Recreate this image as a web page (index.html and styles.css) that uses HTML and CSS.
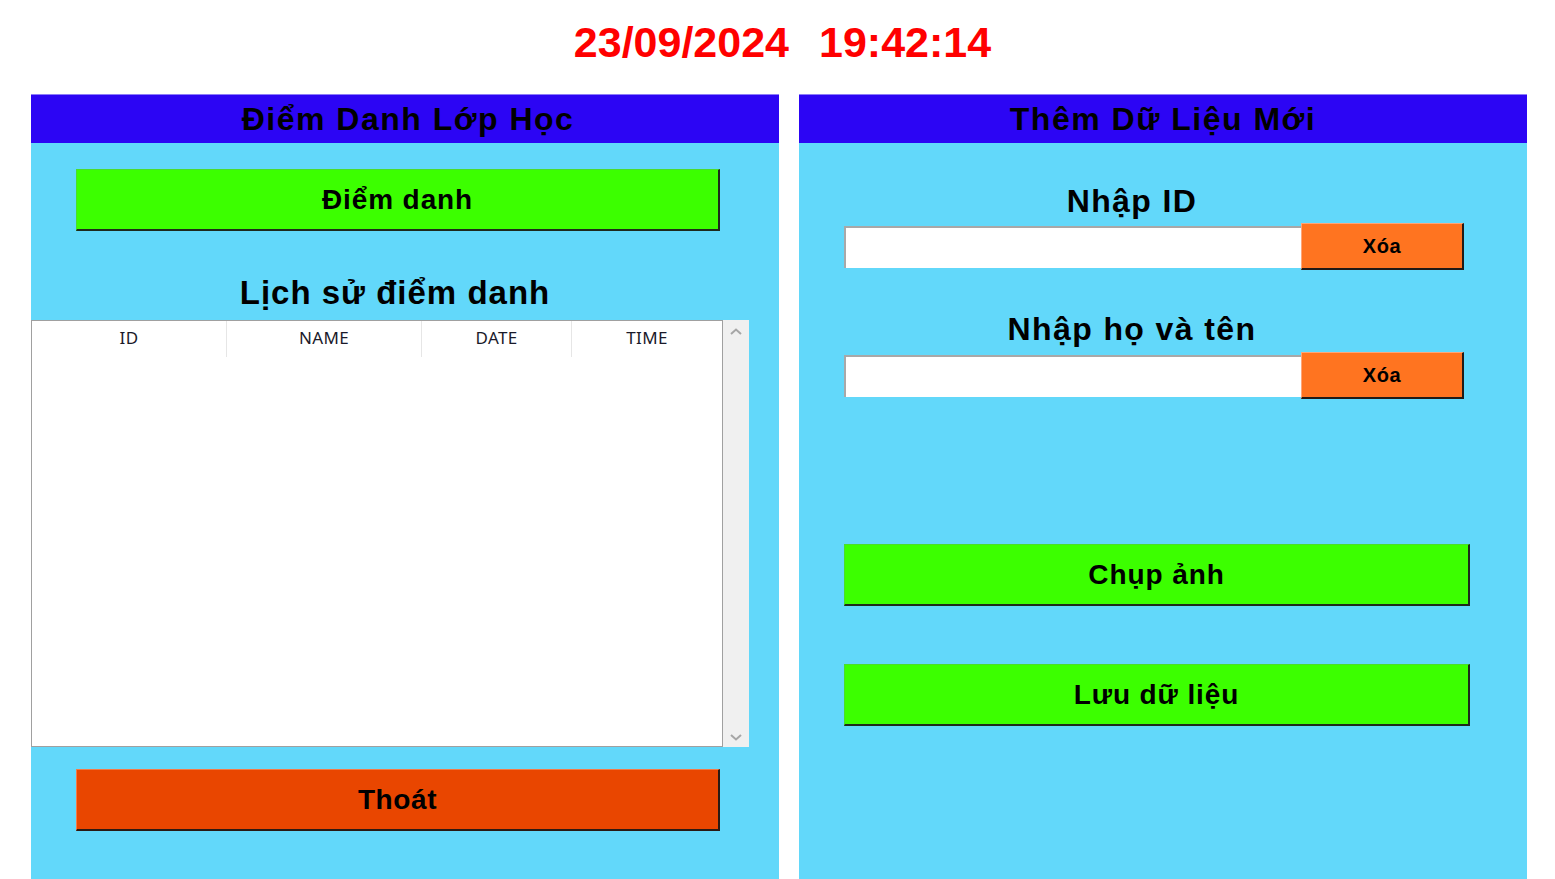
FILE: index.html
```html
<!DOCTYPE html>
<html lang="vi">
<head>
<meta charset="utf-8">
<title>Điểm Danh</title>
<link rel="stylesheet" href="styles.css">
</head>
<body>
<div class="clock"><span>23/09/2024</span><span>19:42:14</span></div>
<div class="panels">
  <section class="panel panel-left">
    <h1 class="panel-head">Điểm Danh Lớp Học</h1>
    <div class="panel-body left-body">
      <button class="btn btn-green btn-wide">Điểm danh</button>
      <h2 class="sub-title">Lịch sử điểm danh</h2>
      <div class="table-wrap">
        <div class="table">
          <div class="thead">
            <div class="th c1">ID</div>
            <div class="th c2">NAME</div>
            <div class="th c3">DATE</div>
            <div class="th c4">TIME</div>
          </div>
        </div>
        <div class="scrollbar">
          <svg class="chev" width="14" height="10" viewBox="0 0 14 10"><path d="M2 7 L7 2.5 L12 7" fill="none" stroke="#a6a6a6" stroke-width="2"/></svg>
          <svg class="chev" width="14" height="10" viewBox="0 0 14 10"><path d="M2 3 L7 7.5 L12 3" fill="none" stroke="#a6a6a6" stroke-width="2"/></svg>
        </div>
      </div>
      <button class="btn btn-red btn-wide">Thoát</button>
    </div>
  </section>
  <section class="panel panel-right">
    <h1 class="panel-head">Thêm Dữ Liệu Mới</h1>
    <div class="panel-body right-body">
      <div class="field first">
        <label class="field-label">Nhập ID</label>
        <div class="field-row">
          <input class="text-input" type="text">
          <button class="btn btn-orange">Xóa</button>
        </div>
      </div>
      <div class="field second">
        <label class="field-label">Nhập họ và tên</label>
        <div class="field-row">
          <input class="text-input" type="text">
          <button class="btn btn-orange">Xóa</button>
        </div>
      </div>
      <button class="btn btn-green btn-right btn-capture">Chụp ảnh</button>
      <button class="btn btn-green btn-right btn-save">Lưu dữ liệu</button>
    </div>
  </section>
</div>
</body>
</html>
```

FILE: styles.css
```css
* { box-sizing: border-box; }
html, body { margin: 0; padding: 0; background: #ffffff; }
body {
  width: 1555px;
  height: 879px;
  overflow: hidden;
  font-family: "Liberation Sans", Arial, sans-serif;
}
.clock {
  height: 94px;
  display: flex;
  justify-content: center;
  gap: 30px;
  padding-top: 17px;
  padding-left: 10px;
  color: #ff0000;
  font-weight: bold;
  font-size: 43px;
  line-height: 50px;
}
.panels {
  display: flex;
  padding-left: 31px;
  gap: 20px;
  height: 785px;
}
.panel {
  background: #62d8fa;
  height: 785px;
  display: flex;
  flex-direction: column;
}
.panel-left { width: 748px; }
.panel-right { width: 728px; }
.panel-head {
  margin: 0;
  height: 49px;
  background: #2c05f4;
  border-top: 1px solid #8c7cf8;
  color: #000;
  font-size: 32px;
  font-weight: bold;
  letter-spacing: 1.5px;
  text-align: center;
  line-height: 48px;
}
.panel-left .panel-head { padding-left: 6px; }
.panel-body { flex: 1; display: flex; flex-direction: column; }
.btn {
  font-family: "Liberation Sans", Arial, sans-serif;
  font-weight: bold;
  color: #000;
  padding: 0;
  cursor: pointer;
  border-style: solid;
  border-width: 1px 2px 2px 1px;
}
.btn-green {
  background: #3cff00;
  border-color: #4cdc2a #1e2a1c #1e2a1c #4cdc2a;
  font-size: 28px;
  letter-spacing: 0.9px;
}
.btn-red {
  background: #e94600;
  border-color: #f57a45 #2a1a14 #2a1a14 #f57a45;
  font-size: 28px;
  letter-spacing: 0.6px;
}
.btn-orange {
  background: #ff7420;
  border-color: #ffa678 #221a16 #221a16 #ffa678;
  font-size: 20px;
  letter-spacing: 0.6px;
  width: 163px;
  height: 47px;
  flex: none;
}
.btn-wide {
  width: 644px;
  height: 62px;
  margin-left: 45px;
}
.left-body .btn-green { margin-top: 26px; }
.sub-title {
  margin: 0;
  margin-top: 42px;
  text-align: center;
  width: 728px;
  font-size: 33px;
  font-weight: bold;
  letter-spacing: 1px;
  line-height: 40px;
  height: 47px;
}
.table-wrap {
  display: flex;
  width: 718px;
  height: 427px;
}
.table {
  width: 692px;
  height: 427px;
  background: #fff;
  border: 1px solid #a0a0a0;
}
.thead {
  display: flex;
  height: 36px;
}
.th {
  font-family: "Noto Sans", "Open Sans", sans-serif;
  font-size: 17px;
  letter-spacing: 0.3px;
  color: #1a1a2a;
  text-align: center;
  line-height: 34px;
  border-right: 1px solid #e6e6e6;
}
.c1 { width: 195px; }
.c2 { width: 195px; }
.c3 { width: 150px; }
.c4 { width: 150px; border-right: none; }
.scrollbar {
  width: 26px;
  height: 427px;
  background: #f0f0f0;
  display: flex;
  flex-direction: column;
  justify-content: space-between;
  align-items: center;
  padding: 7px 0 5px;
}
.chev { display: block; }
.btn-red { margin-top: 22px; }
.right-body { padding-left: 45px; }
.field-label {
  display: block;
  text-align: center;
  width: 576px;
  font-size: 32px;
  font-weight: bold;
  letter-spacing: 1.4px;
  line-height: 40px;
}
.field.first { margin-top: 38px; }
.field.second { margin-top: 39px; }
.field-row {
  display: flex;
  align-items: center;
  margin-top: 2px;
}
.field.second .field-row { margin-top: 3px; }
.text-input {
  width: 457px;
  height: 42px;
  margin: 0;
  background: #fff;
  border-style: solid;
  border-width: 2px 0 0 2px;
  border-color: #a8a8a8;
  outline: none;
}
.btn-right {
  width: 626px;
  height: 62px;
}
.btn-capture { margin-top: 145px; }
.btn-save { margin-top: 58px; }
```
